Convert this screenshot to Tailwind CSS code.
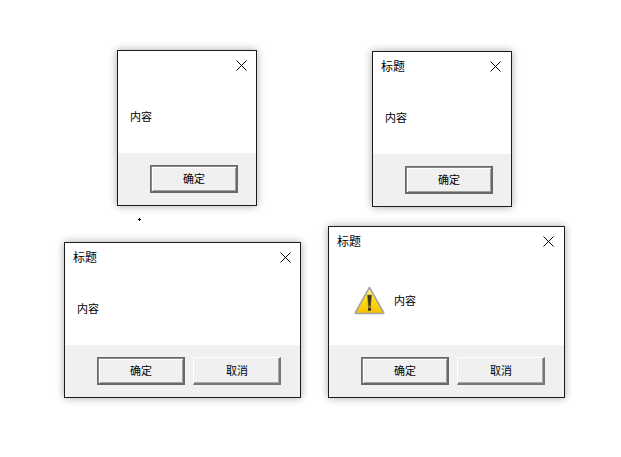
<!DOCTYPE html>
<html lang="zh">
<head>
  <meta charset="UTF-8">
  <title>Dialogs</title>
  <script src="https://cdn.jsdelivr.net/npm/@tailwindcss/browser@4"></script>
</head>
<body class="bg-white font-['Noto_Sans_CJK_SC','Noto_Sans',sans-serif] text-black">
  <div class="relative w-[621px] h-[457px] overflow-hidden">

    <!-- dialog 1: no title -->
    <div class="absolute left-[117px] top-[50px] w-[140px] h-[156px] flex flex-col bg-white border border-[#1c1c1c] shadow-[0_0_8px_rgba(0,0,0,0.35)]">
      <div class="flex justify-end h-[27px] pt-[9px] pr-[9px]">
        <svg class="w-[11px] h-[11px]" viewBox="0 0 11 11"><path d="M0.5 0.5L10.5 10.5M10.5 0.5L0.5 10.5" stroke="#000" stroke-width="1" fill="none"/></svg>
      </div>
      <div class="flex-1 flex items-center pl-[12px] pt-[2px] text-[11px] leading-none">内容</div>
      <div class="h-[52px] bg-[#f0f0f0] flex justify-end items-start pt-[12px] pr-[18px]">
        <button class="w-[88px] h-[28px] pl-[1px] pb-[1px] bg-[#f0f0f0] text-[11px] leading-none border border-r-2 border-b-2 border-[#696969] shadow-[inset_1px_1px_0_#8a8a8a,inset_2px_2px_0_#fff,inset_-1px_-1px_0_#a0a0a0]">确定</button>
      </div>
    </div>

    <!-- dialog 2: title -->
    <div class="absolute left-[372px] top-[51px] w-[140px] h-[156px] flex flex-col bg-white border border-[#1c1c1c] shadow-[0_0_8px_rgba(0,0,0,0.35)]">
      <div class="flex justify-between h-[27px] pt-[9px] pl-[8px] pr-[10px]">
        <span class="-mt-px text-[12px] leading-[12px]">标题</span>
        <svg class="w-[11px] h-[11px]" viewBox="0 0 11 11"><path d="M0.5 0.5L10.5 10.5M10.5 0.5L0.5 10.5" stroke="#000" stroke-width="1" fill="none"/></svg>
      </div>
      <div class="flex-1 flex items-center pl-[12px] pt-[2px] text-[11px] leading-none">内容</div>
      <div class="h-[52px] bg-[#f0f0f0] flex justify-end items-start pt-[12px] pr-[18px]">
        <button class="w-[88px] h-[28px] pl-[1px] pb-[1px] bg-[#f0f0f0] text-[11px] leading-none border border-r-2 border-b-2 border-[#696969] shadow-[inset_1px_1px_0_#8a8a8a,inset_2px_2px_0_#fff,inset_-1px_-1px_0_#a0a0a0]">确定</button>
      </div>
    </div>

    <!-- dialog 3: two buttons -->
    <div class="absolute left-[64px] top-[242px] w-[237px] h-[156px] flex flex-col bg-white border border-[#1c1c1c] shadow-[0_0_8px_rgba(0,0,0,0.35)]">
      <div class="flex justify-between h-[27px] pt-[9px] pl-[8px] pr-[9px]">
        <span class="-mt-px text-[12px] leading-[12px]">标题</span>
        <svg class="w-[11px] h-[11px]" viewBox="0 0 11 11"><path d="M0.5 0.5L10.5 10.5M10.5 0.5L0.5 10.5" stroke="#000" stroke-width="1" fill="none"/></svg>
      </div>
      <div class="flex-1 flex items-center pl-[12px] pt-[2px] text-[11px] leading-none">内容</div>
      <div class="h-[52px] bg-[#f0f0f0] flex justify-end items-start gap-[8px] pt-[12px] pr-[19px]">
        <button class="w-[88px] h-[28px] pl-[1px] pb-[1px] bg-[#f0f0f0] text-[11px] leading-none border border-r-2 border-b-2 border-[#696969] shadow-[inset_1px_1px_0_#8a8a8a,inset_2px_2px_0_#fff,inset_-1px_-1px_0_#a0a0a0]">确定</button>
        <button class="w-[88px] h-[28px] pl-[1px] pb-[1px] bg-[#f0f0f0] text-[11px] leading-none border border-white border-r-2 border-b-2 border-r-[#777] border-b-[#777] shadow-[inset_-1px_-1px_0_#a8a8a8]">取消</button>
      </div>
    </div>

    <!-- dialog 4: warning icon -->
    <div class="absolute left-[328px] top-[226px] w-[237px] h-[172px] flex flex-col bg-white border border-[#1c1c1c] shadow-[0_0_8px_rgba(0,0,0,0.35)]">
      <div class="flex justify-between h-[27px] pt-[9px] pl-[8px] pr-[10px]">
        <span class="-mt-px text-[12px] leading-[12px]">标题</span>
        <svg class="w-[11px] h-[11px]" viewBox="0 0 11 11"><path d="M0.5 0.5L10.5 10.5M10.5 0.5L0.5 10.5" stroke="#000" stroke-width="1" fill="none"/></svg>
      </div>
      <div class="flex-1 flex items-center gap-[9px] pl-[25px] pt-[1px] text-[11px] leading-none">
        <svg class="w-[31px] h-[29px]" viewBox="0 0 31 29">
          <defs>
            <linearGradient id="warn" x1="0" y1="0" x2="0" y2="1">
              <stop offset="0" stop-color="#fff8b0"/>
              <stop offset="0.4" stop-color="#ffe11a"/>
              <stop offset="1" stop-color="#f7bf00"/>
            </linearGradient>
          </defs>
          <path d="M15.5 1.5L29.6 26.4Q30.2 27.5 29 27.5H2Q0.8 27.5 1.4 26.4Z" fill="url(#warn)" stroke="#a4a4a4" stroke-width="1.6" stroke-linejoin="round"/>
          <path d="M13.4 9H17.6L16.6 20.5H14.4Z" fill="#3c3320" stroke="#8a6f10" stroke-width="0.5"/>
          <rect x="14" y="21.5" width="3" height="3.2" fill="#3c3320"/>
        </svg>
        <span>内容</span>
      </div>
      <div class="h-[52px] bg-[#f0f0f0] flex justify-end items-start gap-[8px] pt-[12px] pr-[19px]">
        <button class="w-[88px] h-[28px] pl-[1px] pb-[1px] bg-[#f0f0f0] text-[11px] leading-none border border-r-2 border-b-2 border-[#696969] shadow-[inset_1px_1px_0_#8a8a8a,inset_2px_2px_0_#fff,inset_-1px_-1px_0_#a0a0a0]">确定</button>
        <button class="w-[88px] h-[28px] pl-[1px] pb-[1px] bg-[#f0f0f0] text-[11px] leading-none border border-white border-r-2 border-b-2 border-r-[#777] border-b-[#777] shadow-[inset_-1px_-1px_0_#a8a8a8]">取消</button>
      </div>
    </div>

    <!-- stray cursor speck -->
    <svg class="absolute left-[138px] top-[218px] w-[3px] h-[3px]" viewBox="0 0 3 3"><path d="M1 0H2V1H3V2H2V3H1V2H0V1H1Z" fill="#000"/></svg>
  </div>
</body>
</html>
